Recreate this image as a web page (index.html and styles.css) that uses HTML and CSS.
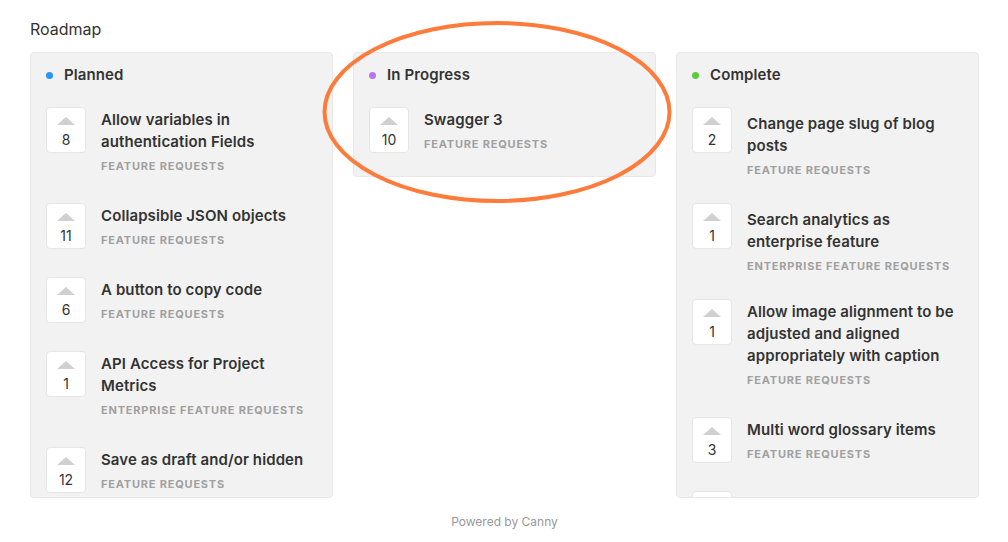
FILE: index.html
```html
<!DOCTYPE html>
<html lang="en">
<head>
<meta charset="utf-8">
<title>Roadmap</title>
<link rel="stylesheet" href="styles.css">
</head>
<body>
<div class="page">
  <h1 class="page-title">Roadmap</h1>
  <div class="board">
    <section class="column">
      <header class="column-head"><span class="dot dot-blue"></span>Planned</header>
      <div class="cards">
        <div class="card">
          <div class="vote"><span class="arrow"></span><span class="count">8</span></div>
          <div class="card-body"><div class="card-title">Allow variables in authentication Fields</div><div class="card-cat">Feature Requests</div></div>
        </div>
        <div class="card">
          <div class="vote"><span class="arrow"></span><span class="count">11</span></div>
          <div class="card-body"><div class="card-title">Collapsible JSON objects</div><div class="card-cat">Feature Requests</div></div>
        </div>
        <div class="card">
          <div class="vote"><span class="arrow"></span><span class="count">6</span></div>
          <div class="card-body"><div class="card-title">A button to copy code</div><div class="card-cat">Feature Requests</div></div>
        </div>
        <div class="card">
          <div class="vote"><span class="arrow"></span><span class="count">1</span></div>
          <div class="card-body"><div class="card-title">API Access for Project Metrics</div><div class="card-cat">Enterprise Feature Requests</div></div>
        </div>
        <div class="card">
          <div class="vote"><span class="arrow"></span><span class="count">12</span></div>
          <div class="card-body"><div class="card-title">Save as draft and/or hidden</div><div class="card-cat">Feature Requests</div></div>
        </div>
      </div>
    </section>
    <section class="column column-short">
      <header class="column-head"><span class="dot dot-purple"></span>In Progress</header>
      <div class="cards">
        <div class="card">
          <div class="vote"><span class="arrow"></span><span class="count">10</span></div>
          <div class="card-body"><div class="card-title">Swagger 3</div><div class="card-cat">Feature Requests</div></div>
        </div>
      </div>
    </section>
    <section class="column">
      <header class="column-head"><span class="dot dot-green"></span>Complete</header>
      <div class="cards">
        <div class="card card-low">
          <div class="vote"><span class="arrow"></span><span class="count">2</span></div>
          <div class="card-body"><div class="card-title">Change page slug of blog posts</div><div class="card-cat">Feature Requests</div></div>
        </div>
        <div class="card card-low">
          <div class="vote"><span class="arrow"></span><span class="count">1</span></div>
          <div class="card-body"><div class="card-title">Search analytics as enterprise feature</div><div class="card-cat">Enterprise Feature Requests</div></div>
        </div>
        <div class="card">
          <div class="vote"><span class="arrow"></span><span class="count">1</span></div>
          <div class="card-body"><div class="card-title">Allow image alignment to be adjusted and aligned appropriately with caption</div><div class="card-cat">Feature Requests</div></div>
        </div>
        <div class="card">
          <div class="vote"><span class="arrow"></span><span class="count">3</span></div>
          <div class="card-body"><div class="card-title">Multi word glossary items</div><div class="card-cat">Feature Requests</div></div>
        </div>
        <div class="card">
          <div class="vote"><span class="arrow"></span><span class="count">4</span></div>
          <div class="card-body"><div class="card-title">Dark mode</div><div class="card-cat">Feature Requests</div></div>
        </div>
      </div>
    </section>
  </div>
  <footer class="powered">Powered by Canny</footer>
  <svg class="highlight" width="360" height="192" viewBox="0 0 360 192" aria-hidden="true">
    <ellipse cx="180" cy="96" rx="172.5" ry="89" fill="none" stroke="#fe7b3c" stroke-width="4"/>
  </svg>
</div>
</body>
</html>
```

FILE: styles.css
```css
* { box-sizing: border-box; }

html, body {
  margin: 0;
  padding: 0;
  background: #ffffff;
}

body {
  font-family: Inter, "Noto Sans", "Liberation Sans", sans-serif;
  color: #333333;
}

.page {
  position: relative;
  padding: 19px 29px 0 30px;
  width: 1008px;
  height: 542px;
  overflow: hidden;
}

.page-title {
  margin: 0 0 13px 0;
  font-size: 16px;
  line-height: 20px;
  font-weight: 400;
  color: #333333;
}

.board {
  display: grid;
  grid-template-columns: 303px 303px 303px;
  column-gap: 20px;
  align-items: start;
}

.column {
  background: #f2f2f2;
  border: 1px solid #e8e8e8;
  border-radius: 4px;
  height: 446px;
  overflow: hidden;
  padding: 0 15px;
}

.column-short {
  height: auto;
  padding-bottom: 21px;
}

.column-head {
  display: flex;
  align-items: center;
  padding-top: 11px;
  height: 33px;
  font-size: 15px;
  line-height: 22px;
  font-weight: 600;
  color: #333333;
  letter-spacing: 0.1px;
}

.dot {
  width: 7px;
  height: 7px;
  border-radius: 50%;
  margin-right: 11px;
  flex: none;
}

.dot-blue { background: #2a94f7; }
.dot-purple { background: #b974f5; }
.dot-green { background: #5bcb3a; }

.cards {
  display: flex;
  flex-direction: column;
  gap: 26px;
  padding-top: 21px;
}

.card {
  display: flex;
  align-items: flex-start;
  gap: 15px;
}

.vote {
  flex: none;
  width: 40px;
  height: 46px;
  background: #ffffff;
  border: 1px solid #e6e6e6;
  border-radius: 4px;
  display: flex;
  flex-direction: column;
  align-items: center;
  padding-top: 9px;
}

.arrow {
  width: 0;
  height: 0;
  border-left: 9px solid transparent;
  border-right: 9px solid transparent;
  border-bottom: 8px solid #d0d0d0;
}

.count {
  margin-top: 7px;
  font-size: 14px;
  line-height: 16px;
  color: #333333;
}

.card-body {
  padding-top: 2px;
  padding-bottom: 4px;
}

.card-low .card-body {
  padding-top: 6px;
  padding-bottom: 0;
}

.card-title {
  font-size: 15px;
  line-height: 22px;
  font-weight: 600;
  color: #333333;
  letter-spacing: 0.1px;
}

.card-cat {
  margin-top: 6px;
  font-size: 11px;
  line-height: 14px;
  font-weight: 700;
  text-transform: uppercase;
  letter-spacing: 0.8px;
  color: #a0a0a0;
}

.powered {
  margin-top: 16px;
  text-align: center;
  font-size: 12px;
  line-height: 16px;
  color: #999999;
}

.highlight {
  position: absolute;
  left: 317px;
  top: 16px;
}
```
